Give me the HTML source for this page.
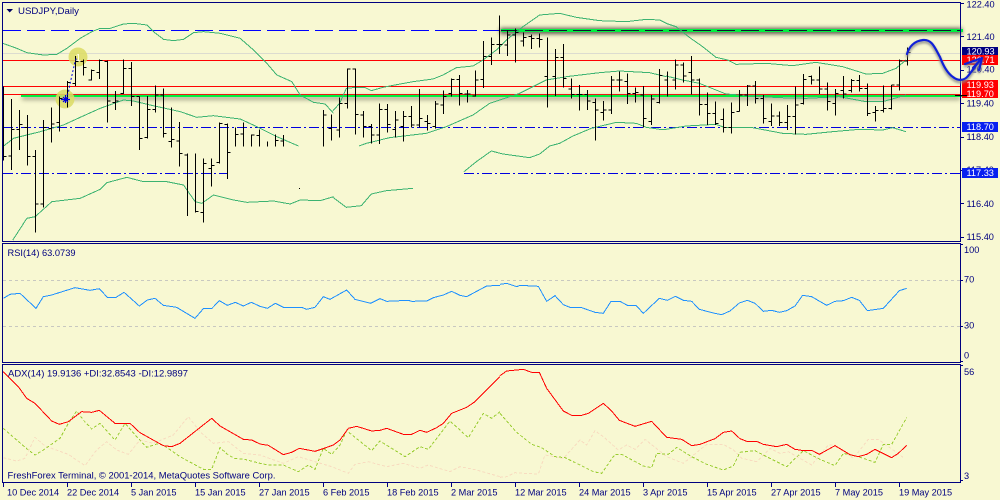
<!DOCTYPE html>
<html><head><meta charset="utf-8"><style>
html,body{margin:0;padding:0;background:#f8f8d2;width:1000px;height:500px;overflow:hidden}
svg{display:block}
text{font-family:"Liberation Sans",sans-serif;font-size:9.2px;fill:#000080}
.l{fill:none;shape-rendering:crispEdges;stroke-linejoin:round}
</style></head><body>
<svg width="1000" height="500" viewBox="0 0 1000 500" xmlns="http://www.w3.org/2000/svg">
<defs>
<filter id="b" x="-5%" y="-300%" width="110%" height="700%"><feGaussianBlur stdDeviation="2"/></filter>
<filter id="c" x="-30%" y="-30%" width="160%" height="160%"><feGaussianBlur stdDeviation="1.2"/></filter>
</defs>
<rect width="1000" height="500" fill="#f8f8d2"/>

<!-- horizontal levels -->
<g shape-rendering="crispEdges">
<rect x="3" y="53" width="957" height="1" fill="#dcdcd0"/>
<rect x="3" y="60" width="957" height="1" fill="#ff0000"/>
<rect x="3" y="86" width="957" height="1" fill="#ff0000"/>
<rect x="3" y="94" width="957" height="1" fill="#ff0000"/>
</g>
<path d="M3 30.5H500" stroke="#0000ff" stroke-dasharray="18 6" class="l"/>
<path d="M3 127.5H960" stroke="#0000e0" stroke-dasharray="10 3 2 3" class="l"/>
<path d="M3 173.5H227M464 173.5H960" stroke="#0000e0" stroke-dasharray="10 3 2 3" class="l"/>

<!-- shadows + green zones -->
<rect x="22" y="96" width="938" height="4" fill="#8a8a70" opacity=".7" filter="url(#b)"/>
<rect x="500" y="28" width="462" height="6" fill="#3a3a30" opacity=".85" filter="url(#b)"/>
<rect x="21" y="95" width="941" height="2" fill="#00f040" shape-rendering="crispEdges"/>
<rect x="501" y="29" width="462" height="3" fill="#00f040" shape-rendering="crispEdges"/>
<path d="M501 30.5H960" stroke="#101030" stroke-dasharray="18 6" class="l"/>
<rect x="3" y="94" width="18" height="1" fill="#ff0000" shape-rendering="crispEdges"/>

<!-- Bollinger -->
<g transform="translate(.17 0) scale(.33333)" class="l" stroke="#3cb371" stroke-width="3">
<polyline points="8,130 50,145 80,158 130,165 170,163 200,145 240,115 275,95 300,85 330,85 370,72 400,70 440,75 460,95 490,118 520,122 550,118 580,98 610,95 660,100 720,115 760,150 800,190 830,225 875,245 900,285 940,307 975,312 1000,340"/>
<polyline points="8,440 40,415 80,405 120,395 190,375 240,352 300,325 370,300 400,303 450,315 540,335 590,352 640,347 720,357 770,380 830,410 895,438"/>
<polyline points="38,720 80,655 105,650 155,605 240,595 300,568 320,548 380,532 430,545 500,545 550,555 585,605 605,610 640,585 700,600 740,607 820,603 870,612 900,600 960,602 1000,590"/>
</g>
<g transform="translate(333 0) scale(.33333)" class="l" stroke="#3cb371" stroke-width="3">
<polyline points="0,332 20,310 40,265 70,262 95,262 115,272 150,262 175,257 240,245 300,237 330,225 370,203 420,198 450,180 490,150 520,120 570,80 620,45 680,40 730,52 800,62 880,65 940,58 980,60 1000,70"/>
<polyline points="78,438 100,430 170,413 280,400 340,380 420,345 470,310 560,280 640,240 700,230 800,218 860,213 950,218 1000,230"/>
<polyline points="0,592 40,622 85,617 115,582 160,572 240,565"/>
<polyline points="393,515 430,485 475,453 510,462 590,473 620,462 650,438 680,430 720,408 775,385 850,367 910,370 940,382 980,388 1000,388"/>
</g>
<g transform="translate(666 0) scale(.33333)" class="l" stroke="#3cb371" stroke-width="3">
<polyline points="0,70 30,80 70,112 110,140 150,172 185,180 210,193 300,190 380,197 450,187 530,200 600,222 650,220 690,205 720,180"/>
<polyline points="0,228 50,240 100,250 180,282 260,288 340,293 420,295 520,290 600,305 650,305 720,285"/>
<polyline points="0,388 60,378 150,373 175,382 260,383 350,400 420,403 500,395 580,388 650,390 680,383 720,395"/>
</g>

<!-- yellow markers -->
<circle cx="78" cy="57" r="9.5" fill="#dcdc64" opacity=".85"/>
<circle cx="65" cy="99" r="9.5" fill="#dcdc64" opacity=".85"/>
<text x="75.5" y="61" style="font-size:10px;fill:#fffff0">1</text>

<!-- bars -->
<g transform="translate(.17 0) scale(.33333)" fill="none" stroke="#000" stroke-width="3" shape-rendering="crispEdges">
<path d="M10 260V482M10 470H19M34 297V510M25 468H34M34 388H43M58 330V450M49 388H58M58 373H67M82 345V497M73 382H82M82 470H91M106 450V698M106 470H97M106 612H115M130 360V622M121 612H130M130 382H139M154 322V428M145 385H154M154 372H163M178 290V395M169 368H178M178 296H187M202 243V323M193 296H202M202 247H211M226 168V258M217 250H226M226 185H235M250 178V227M241 185H250M250 203H259M274 208V242M265 240H274M274 212H283M298 178V237M289 218H298M298 182H307M322 182V368M313 185H322M322 303H331M346 273V330M337 307H346M346 303H355M370 178V282M361 280H370M370 205H379M394 186V318M385 205H394M394 290H403M418 290V450M409 290H418M418 415H427M442 288V415M433 412H442M442 328H451M466 256V338M457 328H466M466 285H475M490 265V413M481 285H490M490 400H499M514 322V443M505 425H514M514 418H523M538 366V500M529 423H538M538 460H547M562 460V648M553 465H562M586 460V638M586 635H595M610 475V668M601 638H610M610 490H619M634 475V560M625 505H634M634 497H643M658 367V490M649 488H658M658 370H667M682 370V537M673 373H682M682 457H691M706 382V440M706 403H715M730 368V440M721 402H730M754 403V440M754 405H763M778 388V440M769 407H778M802 425V440M826 403V440M826 422H835M850 405V440M841 423H850M970 330V440M970 345H979M994 343V422M985 386H994"/>
<path d="M897 565h3"/>
</g>
<g transform="translate(333.5 0) scale(.33333)" fill="none" stroke="#000" stroke-width="3" shape-rendering="crispEdges">
<path d="M18 292V412M9 390H18M18 310H27M42 205V325M33 310H42M42 207H51M66 205V404M57 207H66M66 343H75M90 333V413M81 345H90M90 380H99M114 372V430M105 380H114M114 405H123M138 310V432M129 405H138M138 328H147M162 312V398M153 328H162M162 373H171M186 333V412M177 388H186M186 360H195M210 333V425M201 380H210M210 350H219M234 318V383M225 350H234M234 375H243M258 267V383M249 375H258M258 355H267M282 345V392M273 365H282M282 370H291M306 303V385M297 380H306M306 312H315M330 272V342M321 315H330M330 290H339M354 235V290M345 280H354M354 238H363M378 225V317M369 238H378M378 280H387M402 270V308M393 282H402M402 282H411M426 212V290M417 288H426M426 240H435M450 123V264M441 238H450M450 170H459M474 112V195M465 170H474M474 133H483M498 47V162M489 133H498M498 133H507M522 92V168M513 135H522M522 105H531M546 85V188M537 105H546M546 97H555M570 97V140M561 123H570M570 113H579M594 103V147M585 110H594M594 115H603M618 100V143M609 115H618M618 118H627M642 112V323M633 230H642M666 147V288M657 230H666M666 172H675M690 132V263M681 172H690M690 235H699M714 235V295M705 267H714M714 283H723M738 255V332M729 283H738M738 283H747M762 270V330M753 283H762M762 303H771M786 295V422M777 308H786M786 330H795M810 303V362M801 338H810M810 330H819M834 228V342M825 330H834M834 240H843M858 215V275M849 240H858M858 240H867M882 220V312M873 245H882M882 280H891M906 262V308M897 280H906M906 278H915M930 258V383M921 285H930M930 355H939M954 285V375M945 365H954M954 297H963M978 207V310M969 308H978M978 227H987"/>
</g>
<g transform="translate(666.5 0) scale(.33333)" fill="none" stroke="#000" stroke-width="3" shape-rendering="crispEdges">
<path d="M3 215V290M-6 240H3M27 178V268M18 240H27M27 195H36M51 187V248M42 195H51M51 228H60M75 168V283M66 218H75M75 240H84M99 235V347M90 240H99M99 313H108M123 277V375M114 313H123M123 340H132M147 305V375M138 340H147M147 370H156M171 325V397M162 358H171M171 382H180M195 308V400M186 382H195M195 337H204M219 270V335M210 335H219M219 285H228M243 255V318M234 285H243M243 258H252M267 243V310M258 258H267M267 295H276M291 285V370M282 295H291M291 355H300M315 310V378M306 365H315M315 348H324M339 335V378M330 348H339M339 367H348M363 315V390M354 367H363M363 350H372M387 260V403M378 350H387M387 315H396M411 222V313M402 310H411M411 238H420M435 227V253M426 230H435M435 240H444M459 200V282M450 240H459M459 267H468M483 247V332M474 267H483M483 305H492M507 267V347M498 310H507M507 280H516M531 228V295M522 272H531M531 282H540M555 237V278M546 272H555M555 242H564M579 225V275M570 242H579M579 265H588M603 250V348M594 265H603M603 340H612M627 318V365M618 338H627M627 332H636M651 257V337M642 332H651M651 325H660M675 255V328M666 325H675M675 255H684M699 178V272M690 255H699M699 183H708M723 142V197M714 183H723M723 158H732"/>
</g>

<!-- marker trajectory -->
<path d="M65.5 99 L68.5 92 L70 84 L72 75 L75 62 L76.5 58" fill="none" stroke="#0000e0" stroke-width="1" stroke-dasharray="2 2"/>
<path d="M61 99.5H70M65.5 95V103M63 97L68 102M68 97L63 102" fill="none" stroke="#0000e0" stroke-width="1.2"/>

<!-- right axis panels -->
<g fill="none" stroke="#000080" shape-rendering="crispEdges">
<rect x="2.5" y="2.5" width="958" height="239"/>
<rect x="2.5" y="243.5" width="958" height="119"/>
<rect x="2.5" y="364.5" width="958" height="118"/>
<path d="M961 3.5h3M961 36.5h3M961 70.5h3M961 103.5h3M961 137.5h3M961 170.5h3M961 203.5h3M961 237.5h3M961 244.5h2M961 280.5h2M961 326.5h2M961 361.5h2M961 365.5h2M961 480.5h2"/>
<path d="M3.5 483v4M67.5 483v4M131.5 483v4M195.5 483v4M259.5 483v4M323.5 483v4M387.5 483v4M451.5 483v4M515.5 483v4M579.5 483v4M643.5 483v4M707.5 483v4M771.5 483v4M835.5 483v4M899.5 483v4"/>
</g>

<!-- RSI -->
<path d="M3 280.5H960M3 326.5H960" stroke="#c8c8c0" stroke-dasharray="3 3" class="l"/>
<g transform="translate(0 240) scale(.33333)" class="l" stroke="#1e90ff" stroke-width="3">
<polyline points="10,175 30,163 60,160 108,205 130,170 155,165 225,143 270,151 298,146 322,172 348,172 372,157 418,198 442,180 465,175 490,196 530,202 585,235 610,206 635,206 658,182 682,196 706,187 730,198 754,187 780,199 802,205 826,190 850,202 905,202 920,208 945,202 970,170 990,178 1040,150 1065,178 1112,190 1140,176 1160,184 1225,181 1235,184 1280,183 1300,173 1330,165 1355,154 1380,166 1400,170 1460,138 1500,136"/>
</g>
<g transform="translate(500 240) scale(.33333)" class="l" stroke="#1e90ff" stroke-width="3">
<polyline points="0,133 20,130 50,140 60,136 115,139 140,184 165,167 190,194 210,202 245,203 285,217 310,220 333,184 360,184 382,196 408,196 430,220 478,175 502,181 526,169 550,181 575,184 598,208 640,219 665,224 690,213 718,189 742,181 765,190 790,214 815,211 838,217 860,212 885,198 908,166 935,170 980,196 1005,184 1030,182 1055,172 1078,181 1102,212 1150,205 1198,152 1220,145"/>
</g>

<!-- ADX -->
<g transform="translate(0 360) scale(.33333)" class="l" stroke-width="3">
<polyline stroke="#f8dcc0" stroke-dasharray="9 6" points="10,293 50,303 75,295 105,232 135,258 155,265 205,283 255,317 290,270 320,245 350,270 385,283 420,240 460,250 520,225 565,170 600,215 640,250 685,245 730,280 780,285 850,310 895,290 945,305 995,320 1045,340 1065,313 1105,305 1160,320 1210,310 1260,325 1285,315 1350,335 1380,320 1430,330 1500,350"/>
<polyline stroke="#9acd32" stroke-dasharray="9 6" points="10,205 85,270 105,285 130,270 180,235 205,190 230,153 250,180 275,207 300,190 345,240 375,190 410,230 440,262 470,252 490,255 540,290 610,328 635,328 660,263 685,285 705,296 730,297 780,310 805,315 850,315 895,335 925,315 945,328 970,265 995,283 1020,255 1040,212 1115,272 1140,243 1215,290 1260,260 1285,268 1350,183 1405,233 1450,160 1475,175 1500,155"/>
<polyline stroke="#ff0000" points="10,35 55,80 80,115 105,130 155,183 178,193 205,185 245,155 275,157 298,151 345,190 390,190 420,218 490,257 515,260 540,250 635,175 660,198 730,238 755,240 780,252 805,256 850,284 875,277 898,265 945,274 975,264 1000,255 1020,240 1045,205 1070,199 1115,213 1140,211 1160,205 1210,223 1235,223 1260,211 1280,217 1310,203 1330,190 1355,160 1400,142 1425,125 1500,50"/>
</g>
<g transform="translate(500 360) scale(.33333)" class="l" stroke-width="3">
<polyline stroke="#f8dcc0" stroke-dasharray="9 6" points="0,352 20,350 45,338 70,340 115,342 135,285 190,295 240,240 260,255 285,212 310,230 355,270 380,255 405,268 435,238 500,290 550,310 620,253 670,253 700,270 725,295 770,305 810,265 840,280 865,275 935,315 985,255 1005,255 1060,295 1105,238 1135,238 1200,285 1210,293"/>
<polyline stroke="#9acd32" stroke-dasharray="9 6" points="0,160 50,217 95,253 125,263 165,290 195,293 240,315 280,335 305,340 345,283 365,283 430,318 455,323 470,280 505,283 530,262 575,290 620,313 670,330 700,318 720,277 765,272 790,285 830,305 860,320 910,272 960,298 1005,317 1030,280 1075,290 1125,307 1150,253 1175,253 1220,173"/>
<polyline stroke="#ff0000" points="0,47 20,33 70,28 95,37 118,37 140,85 190,153 215,166 245,166 265,160 310,130 335,153 358,181 405,199 455,184 500,232 545,238 575,257 600,253 645,236 670,217 695,213 720,236 740,244 770,244 790,253 830,260 860,253 885,268 905,271 935,271 958,283 1005,257 1050,284 1075,290 1100,283 1125,268 1175,293 1195,280 1220,256"/>
</g>

<!-- header -->
<path d="M6.5 9H13L9.7 12.5Z" fill="#000060"/>
<text x="18" y="14" textLength="61" lengthAdjust="spacingAndGlyphs">USDJPY,Daily</text>
<text x="7.5" y="256" textLength="68" lengthAdjust="spacingAndGlyphs">RSI(14) 63.0739</text>
<text x="8" y="376.5" textLength="180" lengthAdjust="spacingAndGlyphs">ADX(14) 19.9136 +DI:32.8543 -DI:12.9897</text>
<text x="7.5" y="478.5" textLength="268" lengthAdjust="spacingAndGlyphs">FreshForex Terminal, © 2001-2014, MetaQuotes Software Corp.</text>

<!-- price axis -->
<g text-anchor="start">
<text x="966.5" y="7.5">122.40</text>
<text x="966.5" y="40">121.40</text>
<text x="966.5" y="106.5">119.40</text>
<text x="966.5" y="140">118.40</text>
<text x="966.5" y="173">117.40</text>
<text x="966.5" y="207">116.40</text>
<text x="966.5" y="240">115.40</text>
</g>
<g shape-rendering="crispEdges">
<rect x="962" y="47" width="36" height="8" fill="#000080"/>
<rect x="962" y="55" width="36" height="10" fill="#ff0000"/>
<rect x="962" y="80" width="36" height="18" fill="#ff0000"/>
<rect x="962" y="122" width="36" height="10" fill="#0820f0"/>
<rect x="962" y="168" width="36" height="10" fill="#0820f0"/>
<rect x="955" y="95" width="12" height="1" fill="#000"/>
</g>
<svg x="962" y="47" width="36" height="8"><text x="4.5" y="7.5" style="fill:#fff">120.93</text></svg>
<text x="966.5" y="63" style="fill:#fff">120.71</text>
<text x="966.5" y="72.5">120.40</text>
<text x="966.5" y="88" style="fill:#fff">119.93</text>
<text x="966.5" y="97" style="fill:#fff">119.70</text>
<text x="966.5" y="130" style="fill:#fff">118.70</text>
<text x="966.5" y="176" style="fill:#fff">117.33</text>

<text x="964" y="253">100</text>
<text x="964" y="282.5">70</text>
<text x="964" y="328.5">30</text>
<text x="964" y="358.5">0</text>
<text x="964" y="375">56</text>
<text x="964" y="479">3</text>

<!-- time axis -->
<g>
<text x="7" y="495.5">10 Dec 2014</text>
<text x="67" y="495.5">22 Dec 2014</text>
<text x="131" y="495.5">5 Jan 2015</text>
<text x="195" y="495.5">15 Jan 2015</text>
<text x="259" y="495.5">27 Jan 2015</text>
<text x="323" y="495.5">6 Feb 2015</text>
<text x="387" y="495.5">18 Feb 2015</text>
<text x="451" y="495.5">2 Mar 2015</text>
<text x="515" y="495.5">12 Mar 2015</text>
<text x="579" y="495.5">24 Mar 2015</text>
<text x="643" y="495.5">3 Apr 2015</text>
<text x="707" y="495.5">15 Apr 2015</text>
<text x="771" y="495.5">27 Apr 2015</text>
<text x="835" y="495.5">7 May 2015</text>
<text x="899" y="495.5">19 May 2015</text>
</g>

<!-- hand-drawn forecast curve -->
<g fill="none" stroke-linecap="round" stroke-linejoin="round">
<path d="M907 54C909 47 914 41 923 40C932 39 935 48 940 57C943 65 947 73 953 77C958 81 964 81 968 76C973 70 977 63 982 58M965 64L982 58M982 58L973 68M982 58L979 70" stroke="#888" stroke-width="2.5" filter="url(#c)" transform="translate(0 2)"/>
<path d="M907 54C909 47 914 41 923 40C932 39 935 48 940 57C943 65 947 73 953 77C958 81 964 81 968 76C973 70 977 63 982 58M965 64L982 58M982 58L973 68M982 58L979 70" stroke="#1020d8" stroke-width="2.2"/>
</g>
</svg>
</body></html>
